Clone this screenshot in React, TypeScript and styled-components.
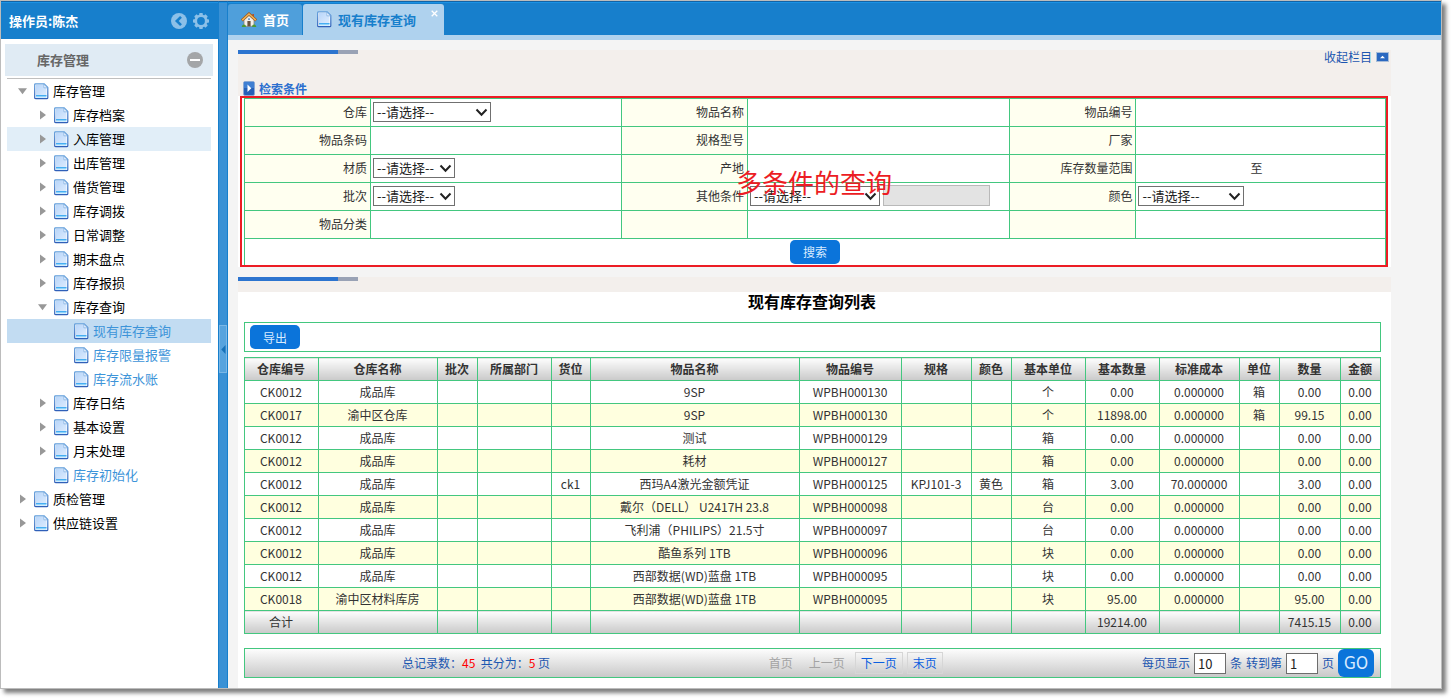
import React from "react";
import styled, { createGlobalStyle, css } from "styled-components";

const GREEN = "#43c77f";
const FONT = '"Noto Sans CJK SC", "Noto Sans", sans-serif';

const GlobalStyle = createGlobalStyle`
  *, *::before, *::after { box-sizing: border-box; }
  body {
    margin: 0;
    background: #fff;
    font-family: ${FONT};
    font-size: 12px;
    line-height: 16px;
    color: #333;
  }
  button, input, select { font-family: inherit; margin: 0; }
  a { text-decoration: none; color: inherit; }
`;

/* ---------- window shell ---------- */

const Shell = styled.div`
  display: flex;
  min-height: calc(100vh - 9px);
  margin: 0 9px 9px 0;
  border: 1px solid #bcbcbc;
  box-shadow: 4px 4px 4px rgba(0, 0, 0, 0.5);
  background: #fff;
`;

const topEdge = css`
  border-top: 1px solid #1263a5;
  box-shadow: inset 0 1px 0 #1b92e4;
`;

const Sidebar = styled.nav`
  width: 217px;
  flex: none;
`;

const Operator = styled.header`
  ${topEdge}
  display: flex;
  align-items: center;
  gap: 6px;
  height: 38px;
  padding: 0 9px 0 8px;
  background: #177fcc;
  color: #fff;
  font-size: 13px;
  font-weight: bold;
`;

const OperatorName = styled.span`
  flex: 1;
`;

const PlainButton = styled.button`
  display: flex;
  padding: 0;
  border: 0;
  background: none;
  cursor: pointer;
`;

const Category = styled.div`
  display: flex;
  align-items: center;
  justify-content: space-between;
  height: 32px;
  margin: 5px 5px 2px 4px;
  padding: 0 10px 0 32px;
  background: #e0ebf4;
  color: #666;
  font-size: 13px;
  font-weight: bold;
`;

const Tree = styled.ul`
  margin: 0 7px 0 6px;
  padding: 0;
  list-style: none;
  border-top: 1px solid #bfbfbf;
`;

const TreeRow = styled.li<{ $level: number; $tone?: "hover" | "selected" }>`
  display: flex;
  align-items: center;
  height: 24px;
  padding-left: ${(p) => 10 + p.$level * 20}px;
  background: ${(p) =>
    p.$tone === "selected" ? "#c2dcf2" : p.$tone === "hover" ? "#e1eef8" : "none"};
`;

const Toggle = styled.span`
  display: flex;
  width: 17px;
`;

const TreeLink = styled.a<{ $leaf: boolean }>`
  margin-left: 4px;
  font-size: 13px;
  color: ${(p) => (p.$leaf ? "#3d94d9" : "#000")};
`;

const Splitter = styled.div`
  ${topEdge}
  display: flex;
  align-items: center;
  flex: none;
  width: 10px;
  border-left: 1px solid #177fcc;
  border-right: 1px solid #177fcc;
  background: #3a91d5;
`;

const SplitterHandle = styled.button`
  display: flex;
  align-items: center;
  justify-content: center;
  width: 8px;
  height: 48px;
  margin-top: 8px;
  padding: 0;
  border: 1px solid #7ab7e6;
  background: #56a3de;
`;

/* ---------- main area ---------- */

const Main = styled.main`
  display: flex;
  flex-direction: column;
  flex: 1;
  min-width: 0;
  background: #f4f4f4;
`;

const TabBar = styled.div`
  ${topEdge}
  display: flex;
  align-items: flex-end;
  gap: 1px;
  height: 39px;
  border-bottom: 5px solid #afd2ee;
  background: #177fcc;
`;

const Tab = styled.a<{ $active?: boolean }>`
  position: relative;
  display: flex;
  align-items: center;
  gap: 6px;
  height: 31px;
  padding: 0 ${(p) => (p.$active ? "28px 0 14px" : "13px")};
  border-radius: 3px 3px 0 0;
  background: ${(p) => (p.$active ? "#afd2ee" : "#4f9fdb")};
  color: ${(p) => (p.$active ? "#177fcc" : "#fff")};
  font-size: 13px;
  font-weight: bold;
`;

const TabClose = styled.span`
  position: absolute;
  top: 6px;
  right: 6px;
  display: flex;
`;

const Content = styled.div`
  display: flex;
  flex-direction: column;
  gap: 10px;
  flex: 1;
  padding: 10px 50px 0 10px;
`;

const Panel = styled.section<{ $grow?: boolean }>`
  flex: ${(p) => (p.$grow ? 1 : "none")};
  background: #fff;
`;

const Strip = styled.div<{ $empty?: boolean }>`
  height: ${(p) => (p.$empty ? "15px" : "auto")};
  background: #f3efec;
`;

const AccentBar = styled.div`
  width: 120px;
  height: 4px;
  border-right: 20px solid #99a2b5;
  background: #2c74cf;
`;

const StripRow = styled.div`
  display: flex;
  justify-content: flex-end;
  height: 27px;
  padding-right: 2px;
`;

const CollapseLink = styled.a`
  display: flex;
  align-items: center;
  gap: 4px;
  height: 6px;
  color: #1c56b0;
`;

const SectionTitle = styled.h2`
  display: flex;
  align-items: center;
  gap: 4px;
  height: 15px;
  margin: 0;
  padding-left: 5px;
  color: #2b6fcf;
  font-size: 12px;
`;

const SearchFrame = styled.form`
  position: relative;
  margin: 0 3px 0 2px;
  padding: 2px 2px 0 4px;

  &::after {
    content: "";
    position: absolute;
    inset: 0;
    border: 2px solid #ec1c24;
    pointer-events: none;
  }
`;

const Annotation = styled.strong`
  position: absolute;
  inset: 0;
  display: flex;
  align-items: center;
  justify-content: center;
  color: #ec1c24;
  font-size: 26px;
  font-weight: 400;
  pointer-events: none;
`;

const FormGrid = styled.table`
  width: 100%;
  table-layout: fixed;
  border-collapse: collapse;

  th, td {
    height: 28px;
    padding: 0 2px 2px;
    border: 1px solid ${GREEN};
  }
  th {
    padding-right: 3px;
    background: #fffff0;
    font-weight: normal;
    text-align: right;
  }
`;

const FieldLine = styled.div<{ $center?: boolean }>`
  display: flex;
  align-items: center;
  justify-content: ${(p) => (p.$center ? "center" : "flex-start")};
  gap: 3px;
`;

const SelectBox = styled.span<{ $width: number }>`
  position: relative;
  display: flex;
  width: ${(p) => p.$width}px;

  select {
    width: 100%;
    height: 20px;
    padding: 0 3px;
    appearance: none;
    border: 1px solid #707070;
    border-radius: 0;
    background: #fff;
    color: #222;
    font-size: 13px;
    line-height: 18px;
  }
  svg {
    position: absolute;
    top: 6px;
    right: 3px;
    pointer-events: none;
  }
`;

const GhostInput = styled.input<{ $width?: number }>`
  display: block;
  width: ${(p) => (p.$width ? p.$width + "px" : "100%")};
  height: 20px;
  padding: 0 2px;
  border: 0;
  background: transparent;
  font-size: 12px;
`;

const DisabledInput = styled.input`
  width: 107px;
  height: 21px;
  border: 1px solid #b9b9b9;
  background: #e3e3e3;
`;

const ActionButton = styled.button`
  width: 50px;
  height: 24px;
  padding: 0;
  border: 0;
  border-radius: 5px;
  background: #0b74da;
  color: #d8ebff;
  font-size: 12px;
`;

/* ---------- result list ---------- */

const ListTitle = styled.h1`
  margin: 0;
  padding: 1px 5px 0 0;
  color: #000;
  font-size: 16px;
  line-height: 17px;
  text-align: center;
`;

const ListBody = styled.div`
  padding: 12px 10px 10px 6px;
`;

const Toolbar = styled.div`
  display: flex;
  align-items: center;
  height: 30px;
  margin-bottom: 5px;
  padding-left: 5px;
  border: 1px solid ${GREEN};
`;

const silver = css`
  background: linear-gradient(#fdfdfd, #c9c9c9);
`;

const DataTable = styled.table`
  width: 100%;
  table-layout: fixed;
  border-collapse: collapse;

  th, td {
    height: 23px;
    padding: 0 1px 1px 0;
    border: 1px solid ${GREEN};
    text-align: center;
    white-space: nowrap;
  }
  thead th {
    ${silver}
    font-weight: bold;
  }
  tbody tr:nth-child(even) td {
    background: #ffffdf;
  }
  tfoot td {
    ${silver}
  }
`;

const Pager = styled.div`
  ${silver}
  display: grid;
  grid-template-columns: 46fr 29fr 38fr;
  align-items: center;
  height: 30px;
  margin-top: 14px;
  border: 1px solid ${GREEN};
  color: #1c56b0;
`;

const PagerSummary = styled.div`
  text-align: center;
  white-space: pre;

  b {
    color: #f00;
    font-weight: normal;
  }
`;

const PagerLinks = styled.div`
  display: flex;
  justify-content: center;
  gap: 4px;
`;

const PageLink = styled.a<{ $off?: boolean }>`
  padding: 2px 5px;
  border: 1px solid ${(p) => (p.$off ? "transparent" : "#d6d6d6")};
  color: ${(p) => (p.$off ? "#a3a3a3" : "#0a5fe0")};
`;

const PagerForm = styled.form`
  display: flex;
  align-items: center;
  justify-content: flex-end;
  gap: 4px;
  padding-right: 6px;

  label {
    display: flex;
    align-items: center;
    gap: 4px;
  }
`;

const PageInput = styled.input`
  width: 32px;
  height: 21px;
  padding: 0 3px;
  border: 1px solid #6d6d6d;
  background: #fff;
  color: #222;
  font-size: 13px;
`;

const GoButton = styled.button`
  width: 36px;
  height: 28px;
  padding: 0;
  border: 0;
  border-radius: 6px;
  background: #0b74da;
  color: #d8ebff;
  font-family: "Liberation Sans Narrow", "DejaVu Sans Condensed", sans-serif;
  font-size: 17px;
`;

/* ---------- icons ---------- */

const DocIcon = () => (
  <svg width="15" height="17" viewBox="0 0 15 17" aria-hidden="true">
    <defs>
      <linearGradient id="docFill" x1="0" y1="0" x2="1" y2="1">
        <stop offset="0" stopColor="#b9d6fa" />
        <stop offset="1" stopColor="#dcebfd" />
      </linearGradient>
      <linearGradient id="docEdge" x1="0" y1="0" x2="0" y2="1">
        <stop offset="0" stopColor="#5f9ddb" />
        <stop offset="1" stopColor="#2f5fb8" />
      </linearGradient>
    </defs>
    <path
      d="M1.5.8H10.200L13.800 4.400V14.700Q13.800 15.700 12.800 15.700H1.700Q.7 15.700.7 14.700V1.600Q.7.8 1.500.8Z"
      fill="#fff"
      stroke="url(#docEdge)"
      strokeWidth="1.200"
    />
    <path d="M2 2H9.600V5H12.500V12.300H2Z" fill="url(#docFill)" />
    <path d="M9.800 1.200V4.800H13.400Z" fill="#f4f9ff" stroke="#6ea6df" strokeWidth=".7" />
    <rect x="2" y="12.400" width="10.500" height="2" fill="#8fd3fb" />
    <rect x="2" y="12" width="10.500" height="1" fill="#45aef2" />
  </svg>
);

const RightArrow = () => (
  <svg width="10" height="10" viewBox="0 0 10 10" aria-hidden="true">
    <path d="M3 .5L9 5L3 9.500Z" fill="#989898" />
  </svg>
);

const DownArrow = () => (
  <svg width="10" height="10" viewBox="0 0 10 10" aria-hidden="true">
    <path d="M1 2.200H10L5.500 8.200Z" fill="#989898" />
  </svg>
);

const BackIcon = () => (
  <svg width="16" height="16" viewBox="0 0 16 16" aria-hidden="true">
    <circle cx="8" cy="8" r="8" fill="#8cc0e8" />
    <path d="M10 3.800L5.800 8L10 12.200" fill="none" stroke="#177fcc" strokeWidth="2.600" />
  </svg>
);

const GearIcon = () => (
  <svg width="16" height="16" viewBox="0 0 16 16" aria-hidden="true">
    <circle cx="8" cy="8" r="5.200" fill="none" stroke="#8cc0e8" strokeWidth="2.600" />
    <g fill="#8cc0e8">
      {[0, 45, 90, 135, 180, 225, 270, 315].map((a) => (
        <rect key={a} x="6.200" y="0" width="3.600" height="3" rx=".8" transform={`rotate(${a} 8 8)`} />
      ))}
    </g>
  </svg>
);

const MinusIcon = () => (
  <svg width="16" height="16" viewBox="0 0 16 16" aria-hidden="true">
    <circle cx="8" cy="8" r="8" fill="#a4a6a8" />
    <rect x="3" y="7" width="10" height="2" fill="#fff" />
  </svg>
);

const HomeIcon = () => (
  <svg width="16" height="16" viewBox="0 0 16 16" aria-hidden="true">
    <path d="M3 8L8 3.500L13 8V14.300H3Z" fill="#f3f1ec" stroke="#8d8479" strokeWidth=".8" />
    <path d="M11.300 2H13V5.500L11.300 4Z" fill="#b5532c" />
    <path d="M.8 8.400L8 1.800L15.200 8.400" fill="none" stroke="#9a5a22" strokeWidth="2.800" />
    <path d="M1.200 8.100L8 1.900L14.800 8.100" fill="none" stroke="#f0b254" strokeWidth="1.500" />
    <rect x="6.400" y="9" width="3.200" height="5.300" fill="#6a5340" />
    <rect x="7" y="6.300" width="2" height="1.700" fill="#6f9ccc" />
    <path d="M.8 14.300Q1.800 11.500 4.500 13L5 15H.8Z" fill="#4c9a33" />
    <path d="M15.200 14.300Q14.200 11.500 11.500 13L11 15H15.200Z" fill="#4c9a33" />
  </svg>
);

const CloseIcon = () => (
  <svg width="7" height="7" viewBox="0 0 7 7" aria-hidden="true">
    <path d="M.7.7L6.300 6.300M6.300.7L.7 6.300" stroke="#fff" strokeWidth="1.300" />
  </svg>
);

const SectionIcon = () => (
  <svg width="12" height="15" viewBox="0 0 12 15" aria-hidden="true">
    <rect x=".5" y=".5" width="11" height="14" rx="1.500" fill="#2560b8" stroke="#8aa9d4" strokeWidth=".8" />
    <rect x="1" y="1" width="10" height="6" fill="#3f7fd2" />
    <path d="M4.500 3.500L8.300 7.200L4.500 11Z" fill="#fff" />
  </svg>
);

const CollapseIcon = () => (
  <svg width="13" height="10" viewBox="0 0 13 10" aria-hidden="true">
    <rect x=".5" y=".5" width="12" height="9" fill="#2b68c0" stroke="#a9bdd8" />
    <path d="M4 6.300L6.500 3.700L9 6.300Z" fill="#fff" />
  </svg>
);

const HandleArrow = () => (
  <svg width="5" height="9" viewBox="0 0 5 9" aria-hidden="true">
    <path d="M4.500 0V9L.3 4.500Z" fill="#1671b8" />
  </svg>
);

/* ---------- data ---------- */

interface TreeNode {
  text: string;
  level: number;
  state: "open" | "closed" | "leaf";
  tone?: "hover" | "selected";
}

const tree: TreeNode[] = [
  { text: "库存管理", level: 0, state: "open" },
  { text: "库存档案", level: 1, state: "closed" },
  { text: "入库管理", level: 1, state: "closed", tone: "hover" },
  { text: "出库管理", level: 1, state: "closed" },
  { text: "借货管理", level: 1, state: "closed" },
  { text: "库存调拨", level: 1, state: "closed" },
  { text: "日常调整", level: 1, state: "closed" },
  { text: "期末盘点", level: 1, state: "closed" },
  { text: "库存报损", level: 1, state: "closed" },
  { text: "库存查询", level: 1, state: "open" },
  { text: "现有库存查询", level: 2, state: "leaf", tone: "selected" },
  { text: "库存限量报警", level: 2, state: "leaf" },
  { text: "库存流水账", level: 2, state: "leaf" },
  { text: "库存日结", level: 1, state: "closed" },
  { text: "基本设置", level: 1, state: "closed" },
  { text: "月末处理", level: 1, state: "closed" },
  { text: "库存初始化", level: 1, state: "leaf" },
  { text: "质检管理", level: 0, state: "closed" },
  { text: "供应链设置", level: 0, state: "closed" },
];

const columns: [string, number | undefined][] = [
  ["仓库编号", 74],
  ["仓库名称", 119],
  ["批次", 40],
  ["所属部门", 74],
  ["货位", 39],
  ["物品名称", undefined],
  ["物品编号", 102],
  ["规格", 70],
  ["颜色", 40],
  ["基本单位", 74],
  ["基本数量", 74],
  ["标准成本", 80],
  ["单位", 40],
  ["数量", 61],
  ["金额", 40],
];

const rows: string[][] = [
  ["CK0012", "成品库", "", "", "", "9SP", "WPBH000130", "", "", "个", "0.00", "0.000000", "箱", "0.00", "0.00"],
  ["CK0017", "渝中区仓库", "", "", "", "9SP", "WPBH000130", "", "", "个", "11898.00", "0.000000", "箱", "99.15", "0.00"],
  ["CK0012", "成品库", "", "", "", "测试", "WPBH000129", "", "", "箱", "0.00", "0.000000", "", "0.00", "0.00"],
  ["CK0012", "成品库", "", "", "", "耗材", "WPBH000127", "", "", "箱", "0.00", "0.000000", "", "0.00", "0.00"],
  ["CK0012", "成品库", "", "", "ck1", "西玛A4激光金额凭证", "WPBH000125", "KPJ101-3", "黄色", "箱", "3.00", "70.000000", "", "3.00", "0.00"],
  ["CK0012", "成品库", "", "", "", "戴尔（DELL） U2417H 23.8", "WPBH000098", "", "", "台", "0.00", "0.000000", "", "0.00", "0.00"],
  ["CK0012", "成品库", "", "", "", "飞利浦（PHILIPS）21.5寸", "WPBH000097", "", "", "台", "0.00", "0.000000", "", "0.00", "0.00"],
  ["CK0012", "成品库", "", "", "", "酷鱼系列 1TB", "WPBH000096", "", "", "块", "0.00", "0.000000", "", "0.00", "0.00"],
  ["CK0012", "成品库", "", "", "", "西部数据(WD)蓝盘 1TB", "WPBH000095", "", "", "块", "0.00", "0.000000", "", "0.00", "0.00"],
  ["CK0018", "渝中区材料库房", "", "", "", "西部数据(WD)蓝盘 1TB", "WPBH000095", "", "", "块", "95.00", "0.000000", "", "95.00", "0.00"],
];

const totals = ["合计", "", "", "", "", "", "", "", "", "", "19214.00", "", "", "7415.15", "0.00"];

/* ---------- pieces ---------- */

const Choice = ({ id, width }: { id: string; width: number }) => (
  <SelectBox $width={width}>
    <select id={id} defaultValue="">
      <option value="">--请选择--</option>
    </select>
    <svg width="13" height="9" viewBox="0 0 13 9" aria-hidden="true">
      <path d="M1.500 1.500L6.500 6.700L11.500 1.500" fill="none" stroke="#222" strokeWidth="2" />
    </svg>
  </SelectBox>
);

const Label = ({ id, children }: { id: string; children: React.ReactNode }) => (
  <th scope="row">
    <label htmlFor={id}>{children}</label>
  </th>
);

const TextCell = ({ id }: { id: string }) => (
  <td>
    <GhostInput id={id} type="text" />
  </td>
);

const SearchForm = () => (
  <SearchFrame onSubmit={(e) => e.preventDefault()}>
    <FormGrid>
      <colgroup>
        <col width="126" />
        <col width="22%" />
        <col width="126" />
        <col width="23%" />
        <col width="126" />
        <col />
      </colgroup>
      <tbody>
        <tr>
          <Label id="warehouse">仓库</Label>
          <td><Choice id="warehouse" width={118} /></td>
          <Label id="name">物品名称</Label>
          <TextCell id="name" />
          <Label id="code">物品编号</Label>
          <TextCell id="code" />
        </tr>
        <tr>
          <Label id="barcode">物品条码</Label>
          <TextCell id="barcode" />
          <Label id="model">规格型号</Label>
          <TextCell id="model" />
          <Label id="maker">厂家</Label>
          <TextCell id="maker" />
        </tr>
        <tr>
          <Label id="material">材质</Label>
          <td><Choice id="material" width={82} /></td>
          <Label id="origin">产地</Label>
          <TextCell id="origin" />
          <Label id="qtyFrom">库存数量范围</Label>
          <td>
            <FieldLine>
              <GhostInput id="qtyFrom" type="text" $width={109} />
              <label htmlFor="qtyTo">至</label>
              <GhostInput id="qtyTo" type="text" $width={109} />
            </FieldLine>
          </td>
        </tr>
        <tr>
          <Label id="batch">批次</Label>
          <td><Choice id="batch" width={82} /></td>
          <Label id="other">其他条件</Label>
          <td>
            <FieldLine>
              <Choice id="other" width={130} />
              <DisabledInput type="text" aria-label="其他条件" disabled />
            </FieldLine>
          </td>
          <Label id="color">颜色</Label>
          <td><Choice id="color" width={106} /></td>
        </tr>
        <tr>
          <Label id="kind">物品分类</Label>
          <TextCell id="kind" />
          <th />
          <td />
          <th />
          <td />
        </tr>
        <tr>
          <td colSpan={6}>
            <FieldLine $center>
              <ActionButton type="submit">搜索</ActionButton>
            </FieldLine>
          </td>
        </tr>
      </tbody>
    </FormGrid>
    <Annotation>多条件的查询</Annotation>
  </SearchFrame>
);

const ResultTable = () => (
  <DataTable>
    <colgroup>
      {columns.map(([name, width]) => (
        <col key={name} width={width} />
      ))}
    </colgroup>
    <thead>
      <tr>
        {columns.map(([name]) => (
          <th key={name} scope="col">{name}</th>
        ))}
      </tr>
    </thead>
    <tbody>
      {rows.map((row, r) => (
        <tr key={r}>
          {row.map((cell, c) => (
            <td key={c}>{cell}</td>
          ))}
        </tr>
      ))}
    </tbody>
    <tfoot>
      <tr>
        {totals.map((cell, c) => (
          <td key={c}>{cell}</td>
        ))}
      </tr>
    </tfoot>
  </DataTable>
);

export default function App() {
  return (
    <>
      <GlobalStyle />
      <Shell>
        <Sidebar>
          <Operator>
            <OperatorName>操作员:陈杰</OperatorName>
            <PlainButton aria-label="后退"><BackIcon /></PlainButton>
            <PlainButton aria-label="设置"><GearIcon /></PlainButton>
          </Operator>
          <Category>
            <span>库存管理</span>
            <PlainButton aria-label="收起"><MinusIcon /></PlainButton>
          </Category>
          <Tree>
            {tree.map((n) => (
              <TreeRow key={n.level + n.text} $level={n.level} $tone={n.tone}>
                <Toggle>
                  {n.state === "open" && <DownArrow />}
                  {n.state === "closed" && <RightArrow />}
                </Toggle>
                <DocIcon />
                <TreeLink href="#" $leaf={n.state === "leaf"}>{n.text}</TreeLink>
              </TreeRow>
            ))}
          </Tree>
        </Sidebar>
        <Splitter>
          <SplitterHandle aria-label="收起侧栏"><HandleArrow /></SplitterHandle>
        </Splitter>
        <Main>
          <TabBar>
            <Tab href="#"><HomeIcon />首页</Tab>
            <Tab href="#" $active>
              <DocIcon />
              现有库存查询
              <TabClose><CloseIcon /></TabClose>
            </Tab>
          </TabBar>
          <Content>
            <Panel>
              <Strip>
                <AccentBar />
                <StripRow>
                  <CollapseLink href="#">收起栏目<CollapseIcon /></CollapseLink>
                </StripRow>
                <SectionTitle><SectionIcon />检索条件</SectionTitle>
              </Strip>
              <SearchForm />
            </Panel>
            <Panel $grow>
              <Strip $empty>
                <AccentBar />
              </Strip>
              <ListTitle>现有库存查询列表</ListTitle>
              <ListBody>
                <Toolbar>
                  <ActionButton type="button">导出</ActionButton>
                </Toolbar>
                <ResultTable />
                <Pager>
                  <PagerSummary>
                    总记录数：<b>45</b>  共分为：<b>5</b> 页
                  </PagerSummary>
                  <PagerLinks>
                    <PageLink $off>首页</PageLink>
                    <PageLink $off>上一页</PageLink>
                    <PageLink href="#">下一页</PageLink>
                    <PageLink href="#">末页</PageLink>
                  </PagerLinks>
                  <PagerForm onSubmit={(e) => e.preventDefault()}>
                    <label>
                      每页显示
                      <PageInput type="text" defaultValue="10" />
                      条
                    </label>
                    <label>
                      转到第
                      <PageInput type="text" defaultValue="1" />
                      页
                    </label>
                    <GoButton type="submit">GO</GoButton>
                  </PagerForm>
                </Pager>
              </ListBody>
            </Panel>
          </Content>
        </Main>
      </Shell>
    </>
  );
}
